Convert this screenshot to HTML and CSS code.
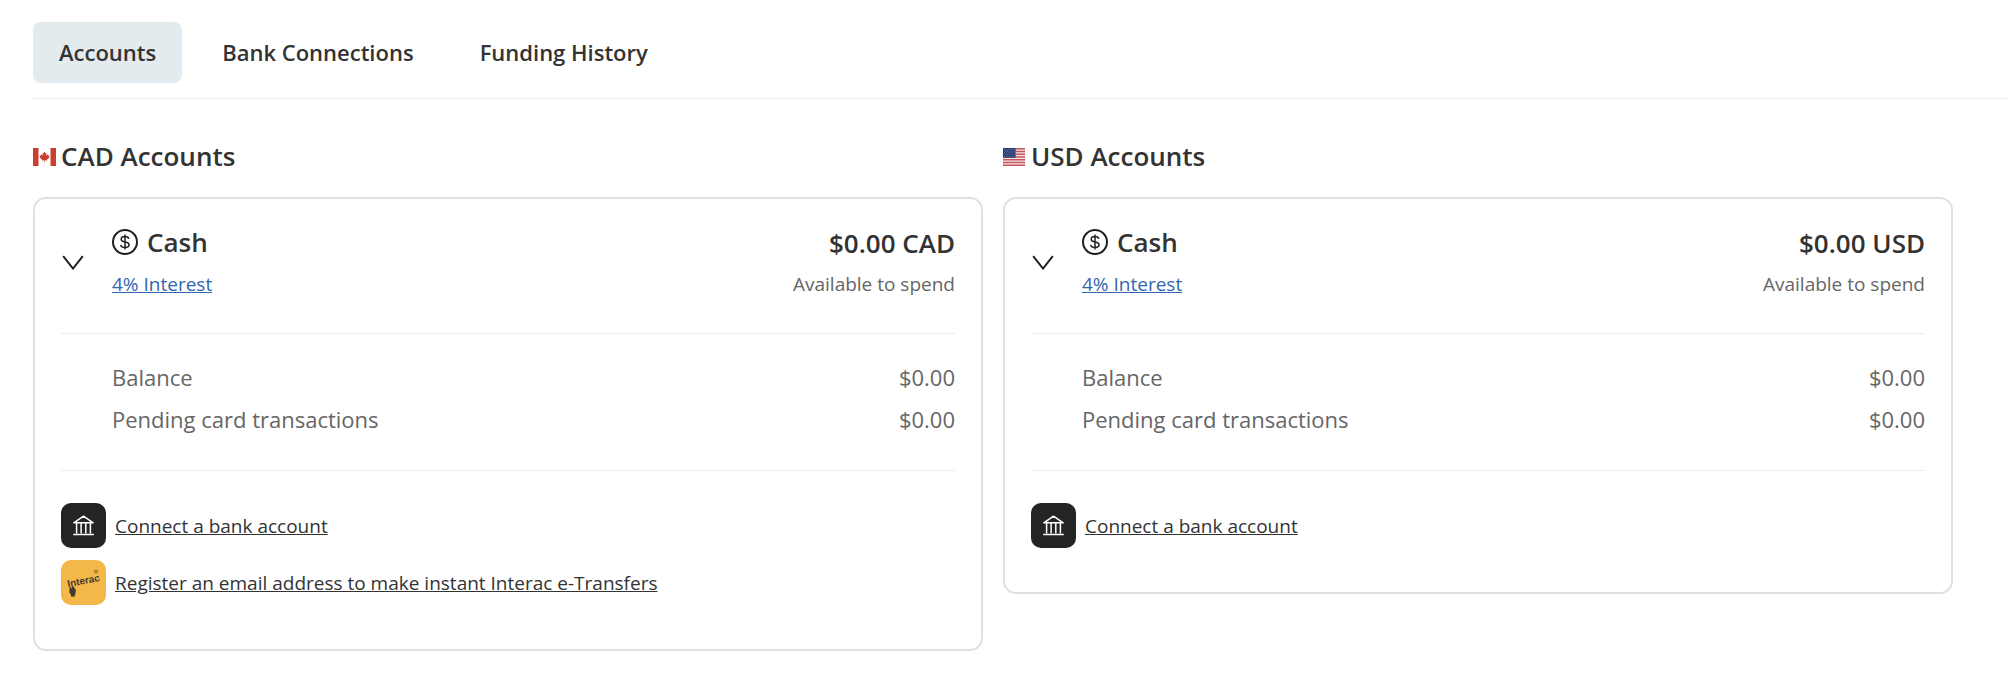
FILE: index.html
```html
<!DOCTYPE html>
<html lang="en">
<head>
<meta charset="utf-8">
<title>Accounts</title>
<link rel="stylesheet" href="styles.css">
</head>
<body>
<svg class="defs" aria-hidden="true">
  <symbol id="chevron" viewBox="0 0 24 16"><path d="M2.200 2.200 12 14.500 21.800 2.200" fill="none" stroke="#202020" stroke-width="2"/></symbol>
  <symbol id="coin" viewBox="0 0 26 26">
    <circle cx="13" cy="13" r="12" fill="none" stroke="#202020" stroke-width="2"/>
    <path d="M16.800 9.800C16.500 8.200 15.200 7.500 13 7.500S9.200 8.400 9.200 10.200c0 4 7.900 1.600 7.900 5.600 0 1.800-1.600 2.700-4.100 2.700s-4-.9-4.300-2.700M13 5.600v14.800" fill="none" stroke="#202020" stroke-width="1.500"/>
  </symbol>
  <symbol id="bank" viewBox="0 0 45 45">
    <path d="M12.800 19.800 22.500 13.200 32.200 19.800Z" fill="none" stroke="#fff" stroke-width="1.500" stroke-linejoin="round"/>
    <path d="M15.600 20v10.500M20.100 20v10.500M24.800 20v10.500M29.400 20v10.500" stroke="#fff" stroke-width="1.500"/>
    <path d="M12.200 31.500h20.600" stroke="#fff" stroke-width="1.600"/>
  </symbol>
</svg>

<nav class="tabs">
  <button class="tab tab-active" type="button">Accounts</button>
  <button class="tab" type="button">Bank Connections</button>
  <button class="tab" type="button">Funding History</button>
</nav>

<main class="columns">
  <section>
    <h2 class="heading">
      <svg class="flag" viewBox="0 0 23 18" aria-hidden="true">
        <path d="M0 0h23v18H0z" fill="#fff"/>
        <path d="M0 0h5.500v18H0zM17.500 0H23v18h-5.500z" fill="#c93e2c"/>
        <path d="M11.500 3.600l1.100 2 1-.4-.3 2.600 1.400-1.200.4 1 1.300-.2-.5 1.400.8.500-2.700 2.300.2.900-2.400-.2v2.100h-.6v-2.100l-2.400.2.200-.9-2.700-2.300.8-.5-.5-1.400 1.300.2.400-1 1.400 1.200-.3-2.600 1 .4z" fill="#c93e2c"/>
      </svg>
      CAD Accounts
    </h2>
    <article class="card">
      <div class="summary">
        <button class="toggle" type="button" aria-label="Collapse CAD cash account"><svg class="chevron"><use href="#chevron"/></svg></button>
        <div class="name">
          <h3 class="title"><svg class="coin"><use href="#coin"/></svg>Cash</h3>
          <a class="interest" href="#">4% Interest</a>
        </div>
        <div class="amount">
          <strong class="total">$0.00 CAD</strong>
          <span class="note">Available to spend</span>
        </div>
      </div>
      <dl class="details">
        <div class="row"><dt>Balance</dt><dd>$0.00</dd></div>
        <div class="row"><dt>Pending card transactions</dt><dd>$0.00</dd></div>
      </dl>
      <div class="actions">
        <a class="action" href="#"><svg class="badge badge-dark"><use href="#bank"/></svg>Connect a bank account</a>
        <a class="action" href="#">
          <svg class="badge badge-gold" viewBox="0 0 45 45" aria-hidden="true">
            <g transform="rotate(-11 8 27)">
              <text class="brand" x="7" y="27">Interac</text>
            </g>
            <circle cx="35" cy="11.500" r="1.500" fill="none" stroke="#4a3b20" stroke-width=".7"/>
            <path d="M8.600 27.500c1-.9 1.700-.3 1.900.4l.4 1.600 0-2.500c.2-1.200 1.700-1.200 1.900 0l.7 1.300c1.200.4 1.500 1.600 1.300 3l-.5 2.900-.6 2.400-3.400.2-.6-2.200-1.400-2.400z" fill="#443a2a"/>
          </svg>Register an email address to make instant Interac e-Transfers</a>
      </div>
    </article>
  </section>

  <section>
    <h2 class="heading">
      <svg class="flag" viewBox="0 0 23 18" aria-hidden="true">
        <path d="M0 0h22v18H0z" fill="#f4e6e6"/>
        <path d="M0 .7h22M0 3.500h22M0 6.200h22M0 9h22M0 11.800h22M0 14.500h22M0 17.300h22" stroke="#c4575c" stroke-width="1.400"/>
        <path d="M0 0h12.500v9.700H0z" fill="#26376d"/>
        <path d="M1 1.500h11M2 3.200h10M1 4.900h11M2 6.600h10M1 8.300h11" stroke="#8b98bd" stroke-width=".8" stroke-dasharray="1 1.200"/>
      </svg>
      USD Accounts
    </h2>
    <article class="card">
      <div class="summary">
        <button class="toggle" type="button" aria-label="Collapse USD cash account"><svg class="chevron"><use href="#chevron"/></svg></button>
        <div class="name">
          <h3 class="title"><svg class="coin"><use href="#coin"/></svg>Cash</h3>
          <a class="interest" href="#">4% Interest</a>
        </div>
        <div class="amount">
          <strong class="total">$0.00 USD</strong>
          <span class="note">Available to spend</span>
        </div>
      </div>
      <dl class="details">
        <div class="row"><dt>Balance</dt><dd>$0.00</dd></div>
        <div class="row"><dt>Pending card transactions</dt><dd>$0.00</dd></div>
      </dl>
      <div class="actions">
        <a class="action" href="#"><svg class="badge badge-dark"><use href="#bank"/></svg>Connect a bank account</a>
      </div>
    </article>
  </section>
</main>
</body>
</html>
```
FILE: styles.css
```css
* { box-sizing: border-box; }

body {
  margin: 0;
  padding: 22px 0 0 33px;
  background: #fff;
  color: #333;
  font-family: "Open Sans", "Noto Sans", sans-serif;
}

button {
  border: 0;
  background: none;
  color: inherit;
  font-family: inherit;
  cursor: pointer;
}

h2, h3, dl, dd { margin: 0; }

.defs {
  position: absolute;
  width: 0;
  height: 0;
}

.tabs {
  display: flex;
  gap: 14px;
  padding-bottom: 15px;
  border-bottom: 1px solid #ececec;
}

.tab {
  padding: 15px 26px;
  border-radius: 8px;
  font-size: 22px;
  font-weight: 600;
  line-height: 31px;
}

.tab-active { background: #e3ebee; }

.columns {
  display: grid;
  grid-template-columns: 1fr 1fr;
  gap: 20px;
  align-items: start;
  padding: 39px 55px 0 0;
}

.heading {
  display: flex;
  align-items: center;
  gap: 5px;
  margin-bottom: 23px;
  font-size: 26px;
  font-weight: 600;
  line-height: 36px;
}

.flag {
  width: 23px;
  height: 18px;
  margin-top: 2px;
}

.card {
  padding: 26px;
  border: 2px solid #e0e0e0;
  border-radius: 13px;
}

.summary {
  display: flex;
  align-items: center;
  padding-bottom: 34px;
}

.toggle {
  width: 51px;
  padding: 0;
  text-align: left;
}

.chevron {
  display: block;
  width: 24px;
  height: 16px;
}

.name { flex: 1; }

.title {
  display: flex;
  align-items: center;
  gap: 9px;
  margin-bottom: 10px;
  font-size: 26px;
  font-weight: 600;
  line-height: 34px;
}

.coin {
  width: 26px;
  height: 26px;
}

.interest {
  display: block;
  width: fit-content;
  color: #3366b0;
  font-size: 19px;
  line-height: 30px;
}

.amount { text-align: right; }

.total, .note { display: block; }

.total {
  margin-bottom: 8px;
  font-size: 26px;
  font-weight: 600;
  line-height: 36px;
}

.note {
  color: #666;
  font-size: 19px;
  line-height: 30px;
}

.details {
  display: grid;
  gap: 12px;
  padding: 28px 0 36px 51px;
  border-top: 1px solid #ececec;
  border-bottom: 1px solid #ececec;
  color: #666;
  font-size: 22px;
  line-height: 30px;
}

.row {
  display: flex;
  justify-content: space-between;
}

.actions {
  display: grid;
  justify-items: start;
  gap: 12px;
  padding: 32px 0 18px;
}

.action {
  display: flex;
  align-items: center;
  gap: 9px;
  color: #333;
  font-size: 19px;
  line-height: 30px;
}

.badge {
  flex: none;
  width: 45px;
  height: 45px;
  border-radius: 10px;
}

.badge-dark { background: #222524; }

.badge-gold { background: #f4b84a; }

.brand {
  fill: #443a2a;
  font: bold 10px "Liberation Sans", Arial, sans-serif;
}
```
